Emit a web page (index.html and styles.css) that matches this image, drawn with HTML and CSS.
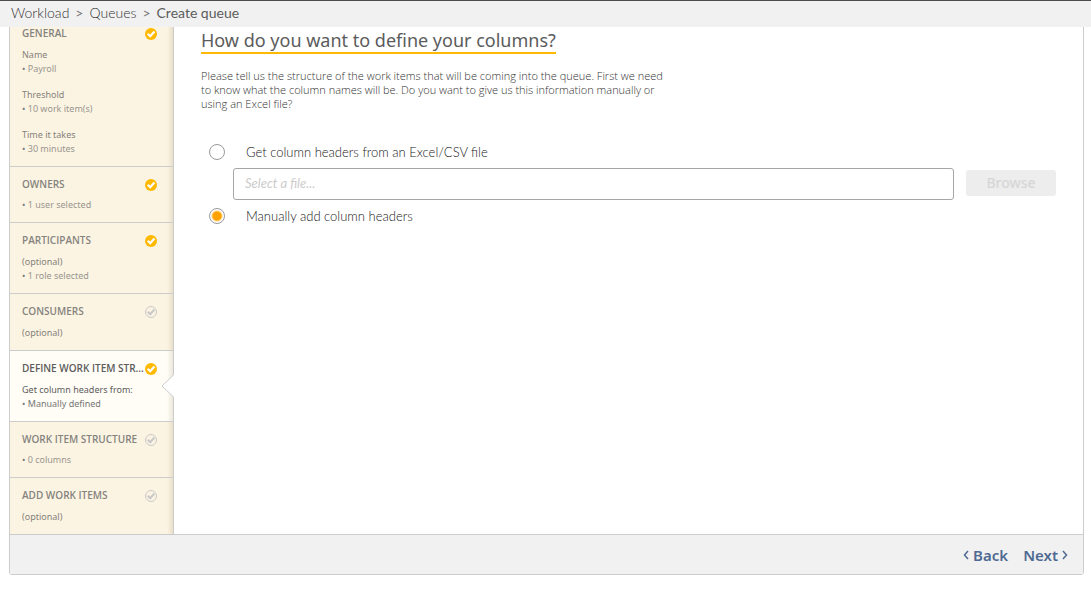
FILE: index.html
```
<!DOCTYPE html>
<html lang="en">
<head>
<meta charset="utf-8">
<title>Create queue</title>
<link rel="stylesheet" href="styles.css">
</head>
<body>
<svg class="sprite" aria-hidden="true">
  <symbol id="done" viewBox="0 0 12 12">
    <circle cx="6" cy="6" r="6" fill="#ffb900"/>
    <path d="M2.700 5.800l2.500 2.400 4.200-4.600" fill="none" stroke="#fff" stroke-width="2.200"/>
  </symbol>
  <symbol id="todo" viewBox="0 0 12 12">
    <circle cx="6" cy="6" r="5.5" fill="none" stroke="#c9c9c9"/>
    <path d="M2.700 5.800l2.500 2.400 4.200-4.600" fill="none" stroke="#c9c9c9" stroke-width="2.200"/>
  </symbol>
</svg>
<header class="topbar">
  <nav class="crumbs" aria-label="Breadcrumb">
    <a href="#">Workload</a>
    <span class="sep">&gt;</span>
    <a href="#">Queues</a>
    <span class="sep">&gt;</span>
    <span class="current">Create queue</span>
  </nav>
</header>
<div class="wizard">
  <div class="body">
    <aside class="steps">
      <section class="step">
        <div class="step-head"><h2>GENERAL</h2><svg class="check"><use href="#done"/></svg></div>
        <p class="label">Name</p><p class="item">Payroll</p>
        <p class="label next">Threshold</p><p class="item">10 work item(s)</p>
        <p class="label next">Time it takes</p><p class="item">30 minutes</p>
      </section>
      <section class="step">
        <div class="step-head"><h2>OWNERS</h2><svg class="check"><use href="#done"/></svg></div>
        <p class="item">1 user selected</p>
      </section>
      <section class="step">
        <div class="step-head"><h2>PARTICIPANTS</h2><svg class="check"><use href="#done"/></svg></div>
        <p class="label">(optional)</p><p class="item">1 role selected</p>
      </section>
      <section class="step">
        <div class="step-head"><h2>CONSUMERS</h2><svg class="check"><use href="#todo"/></svg></div>
        <p class="label">(optional)</p>
      </section>
      <section class="step active">
        <div class="step-head"><h2>DEFINE WORK ITEM STR...</h2><svg class="check"><use href="#done"/></svg></div>
        <p class="label">Get column headers from:</p><p class="item">Manually defined</p>
        <svg class="notch" viewBox="0 0 13 24" aria-hidden="true">
          <path d="M13 0.5L1 12l12 11.5z" fill="#fff"/>
          <path d="M12 0.5v1L1 12l11 10.500v1" fill="none" stroke="#ccc"/>
        </svg>
      </section>
      <section class="step">
        <div class="step-head"><h2>WORK ITEM STRUCTURE</h2><svg class="check"><use href="#todo"/></svg></div>
        <p class="item">0 columns</p>
      </section>
      <section class="step">
        <div class="step-head"><h2>ADD WORK ITEMS</h2><svg class="check"><use href="#todo"/></svg></div>
        <p class="label">(optional)</p>
      </section>
    </aside>
    <main class="content">
      <h1>How do you want to define your columns?</h1>
      <p class="intro">Please tell us the structure of the work items that will be coming into the queue. First we need<br>to know what the column names will be. Do you want to give us this information manually or<br>using an Excel file?</p>
      <label class="option"><input type="radio" name="source"><span>Get column headers from an Excel/CSV file</span></label>
      <div class="file-row">
        <input class="file" type="text" placeholder="Select a file..." aria-label="File">
        <button class="browse" type="button" disabled>Browse</button>
      </div>
      <label class="option"><input type="radio" name="source" checked><span>Manually add column headers</span></label>
    </main>
  </div>
  <footer class="footer">
    <button type="button"><svg class="chev" viewBox="0 0 6 10"><path d="M5 1L1.500 5 5 9"/></svg>Back</button>
    <button type="button">Next<svg class="chev" viewBox="0 0 6 10"><path d="M1 1l3.500 4L1 9"/></svg></button>
  </footer>
</div>
</body>
</html>
```
FILE: styles.css
```
* { box-sizing: border-box; }
body { margin: 0; background: #fff; color: #666; font-family: "Noto Sans", sans-serif; }
h1, h2, p { margin: 0; }
.sprite { display: none; }

.topbar {
  position: relative;
  z-index: 2;
  height: 27px;
  padding: 0 11px;
  border-top: 1px solid #4f4a4c;
  background: #f1f1f1;
}
.crumbs { display: flex; gap: 6px; font: 14px/24px Lato, sans-serif; }
.crumbs a { color: #333; font-weight: 300; text-decoration: none; }
.crumbs .sep { color: #777; }
.crumbs .current { color: #5c5c5c; }

.wizard {
  margin: -12px 7px 16px 9px;
  border: 1px solid #ccc;
  border-radius: 3px;
  overflow: hidden;
}
.body { display: flex; }

.steps {
  flex: none;
  width: 164px;
  border-right: 1px solid #ccc;
  background: #fcf4e2;
}
.step {
  position: relative;
  padding: 10px 16px 10px 12px;
  border-bottom: 1px solid #ccc;
  background-image: linear-gradient(to left, rgba(90, 70, 30, 0.12), transparent 6px);
  color: #85827c;
  font-size: 9px;
  line-height: 14px;
}
.step:last-child { border-bottom: 0; }
.step-head { display: flex; justify-content: space-between; margin-bottom: 7px; }
.step h2 { min-width: 0; font: 600 10px/14px "Open Sans", sans-serif; color: #85837f; white-space: nowrap; }
.check { flex: none; width: 12px; height: 12px; margin-top: 2px; }
.label { margin-top: 8px; }
.label.next { margin-top: 12px; }
.item { color: #999690; }
.item::before { content: "• "; color: #777; }
.active { background-color: #fffdf6; color: #5c5c5c; }
.active h2 { color: #5c5c5c; }
.active .item { color: #777; }
.notch { position: absolute; right: -1px; top: 23px; width: 13px; height: 24px; }

.content { flex: 1; padding: 12px 27px; }
h1 {
  width: fit-content;
  border-bottom: 2px solid #ffb900;
  font: 400 18px/24px "Noto Sans", sans-serif;
  color: #5c5c5c;
}
.intro { margin: 15px 0 25px; font: 300 11px/14px "Open Sans", sans-serif; color: #333; }
.option {
  display: flex;
  align-items: center;
  gap: 21px;
  height: 32px;
  padding-left: 8px;
  font: 300 13px/16px Lato, sans-serif;
  color: #222;
}
.option input {
  appearance: none;
  width: 16px;
  height: 16px;
  margin: 0;
  border: 1px solid #999;
  border-radius: 50%;
  background: #fff;
}
.option input:checked { background: radial-gradient(circle, #ffa200 4px, #fff 6px); }
.file-row { display: flex; align-items: center; gap: 12px; padding-left: 32px; }
.file {
  flex: 1;
  min-width: 0;
  height: 32px;
  padding: 0 11px 2px;
  border: 1px solid #a6a6a6;
  border-radius: 3px;
  font: 13px/16px Lato, sans-serif;
}
.file::placeholder { color: #ccc; font-style: italic; }
.browse {
  width: 90px;
  height: 26px;
  margin-bottom: 2px;
  border: 0;
  border-radius: 3px;
  background: #ededed;
  color: #d6d6d6;
  font: 500 14px/20px "Noto Sans", sans-serif;
}

.footer {
  display: flex;
  justify-content: flex-end;
  gap: 15px;
  height: 40px;
  padding: 0 15px;
  border-top: 1px solid #ccc;
  background: #f1f1f1;
}
.footer button {
  display: flex;
  align-items: center;
  gap: 4px;
  padding: 0;
  border: 0;
  background: none;
  color: #4f6a92;
  font: 600 15px/20px "Noto Sans", sans-serif;
}
.chev { width: 6px; height: 10px; fill: none; stroke: #4f6a92; stroke-width: 1.500; }
```
